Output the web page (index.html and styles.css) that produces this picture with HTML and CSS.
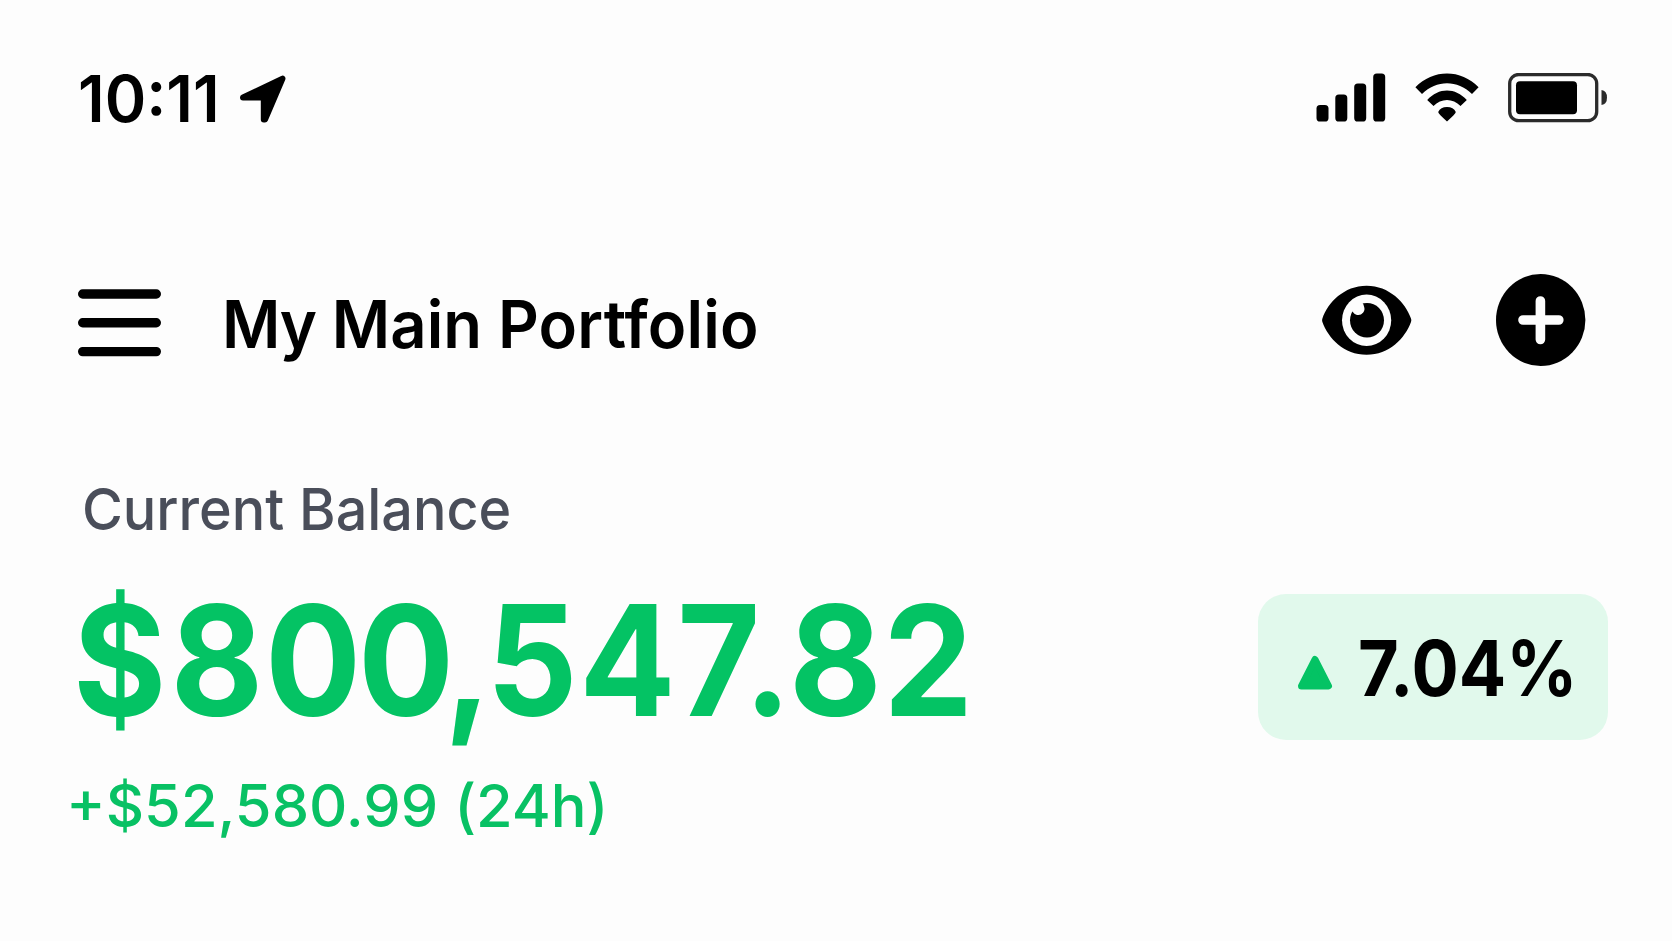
FILE: index.html
```html
<!DOCTYPE html>
<html lang="en">
<head>
<meta charset="utf-8">
<title>My Main Portfolio</title>
<link rel="stylesheet" href="styles.css">
</head>
<body>
<header class="status">
  <div class="status-left">
    <span class="time">10:11</span>
    <svg class="arrow" viewBox="0 0 48 50"><path d="M4 22.5 43.5 3.6 26 44.5H24.8V22.5Z"/></svg>
  </div>
  <div class="status-right">
    <svg class="signal" viewBox="0 0 70 50"><rect x="0.5" y="32" width="12" height="16.5" rx="3.6"/><rect x="19.3" y="21.5" width="12" height="27" rx="3.6"/><rect x="38.2" y="10.5" width="12" height="38" rx="3.6"/><rect x="57.2" y=".5" width="12" height="48" rx="3.6"/></svg>
    <svg class="wifi" viewBox="0 0 64 50"><path d="M.4 14.8C18-3.6 46-3.6 63.6 14.8L57 21.5C42.5 7 21.5 7 7 21.5ZM12.2 27.5C23.5 14.7 40.5 14.7 51.8 27.5L45.5 33.6C38 25.5 26 25.5 18.5 33.6ZM23.2 39.5Q25.5 34.5 32 34.5T40.8 39.5Q40.8 41 32 49Q23.2 41 23.2 39.5Z" transform="translate(0 -.5)"/></svg>
    <svg class="battery" viewBox="0 0 100 50"><rect x="1.7" y="1.5" width="87" height="46.2" rx="9" class="case"/><rect x="8" y="8.3" width="61" height="33" rx="4"/><path d="M93.5 16.9Q99 17.7 99 24.5T93.5 31.9Z" class="nub"/></svg>
  </div>
</header>
<nav class="bar">
  <svg class="menu" viewBox="0 0 84 70"><path d="M4.7 5H78.3M4.7 33.8H78.3M4.7 62.6H78.3"/></svg>
  <h1 class="title"><span class="t1">My</span> Main <span class="t2">Portfolio</span></h1>
  <svg class="eye" viewBox="0 0 90 70"><path d="M.4 37Q-.2 35.3 .4 33.5C6 17.5 22 .8 44.6 .8S83.3 17.5 89 33.5Q89.6 35.3 89 37C83.3 53 67.2 69.8 44.6 69.8S6 53 .4 37Z"/><ellipse cx="44.6" cy="35.3" rx="24.6" ry="25.7" class="white"/><ellipse cx="45" cy="35.3" rx="17" ry="17.3"/><path d="M30.3 26.5Q32.5 29.5 35 29.9A6.2 6.2 0 0 0 42 21.5Q41.7 19 40 17.4L34 14 26 22Z" class="white"/></svg>
  <svg class="plus" viewBox="0 0 90 92"><ellipse cx="44.700" cy="46" rx="44.700" ry="46"/><path d="M27 46H62.8M44.4 27V65.5" /></svg>
</nav>
<main class="balance">
  <p class="label">Current Balance</p>
  <div class="row">
    <p class="amount"><span class="cur">$</span><span class="d8">8</span><span class="d0">0</span><span class="d0b">0</span><span class="comma">,</span><span class="rest">547.82</span></p>
    <div class="badge">
      <svg class="up" viewBox="0 0 36 36"><path d="M18 4.5 31.5 31H4.5Z"/></svg>
      <span class="percent">7.04%</span>
    </div>
  </div>
  <p class="delta">+$52,580.99 (24h)</p>
</main>
</body>
</html>
```
FILE: styles.css
```css
* { box-sizing: border-box; }
body {
  margin: 0;
  width: 1672px;
  height: 941px;
  overflow: hidden;
  background: #fdfdfd;
  color: #000;
  font-family: Inter, "Liberation Sans", sans-serif;
}
h1, p { margin: 0; }
h1, p, span { line-height: 1; white-space: nowrap; transform-origin: 0 50%; }
svg { display: block; flex: none; }

.status { display: flex; justify-content: space-between; padding: 67px 64px 0 78px; height: 131px; }
.status-left, .status-right { display: flex; }
.time { font-size: 64px; font-weight: 570; width: 161px; transform: scaleX(.984); }
.arrow { width: 48px; height: 50px; margin-top: 8px; }
.arrow path { stroke: #000; stroke-width: 6; stroke-linejoin: round; }
.status-right { padding-top: 6px; }
.signal { width: 70px; height: 50px; }
.wifi { width: 64px; height: 50px; margin-left: 28.5px; }
.battery { width: 100px; height: 50px; margin-left: 29.5px; }
.case { fill: none; stroke: #2b2b2b; stroke-width: 3.3; }
.nub { fill: #2b2b2b; }

.bar { display: flex; padding: 143px 86px 0 78px; height: 300px; }
.menu { width: 84px; height: 70px; margin-top: 15px; }
.menu path { stroke: #000; stroke-width: 9.4; stroke-linecap: round; }
.title { flex: 1; margin: 18.3px 0 0 59.5px; font-size: 65.3px; font-weight: 600; transform: scaleX(.97); }
.t1 { letter-spacing: -1.2px; }
.t2 { letter-spacing: .2px; }
.eye { width: 90px; height: 70px; margin: 11px 84px 0 0; }
.white { fill: #fdfdfd; }
.plus { width: 90px; height: 92px; }
.plus path { stroke: #fdfdfd; stroke-width: 9.6; stroke-linecap: round; }

.balance { padding: 49px 64px 0 66px; }
.label { margin-left: 16px; height: 58px; font-size: 58.2px; font-weight: 450; color: #4a4e5a; transform: scaleX(.957); }
.row { display: flex; justify-content: space-between; margin-top: 45px; height: 157px; padding-left: 7px; }
.amount { margin-top: 1px; font-size: 153.6px; font-weight: 700; color: #04c364; transform: scaleX(.929); }
.cur { letter-spacing: 4.5px; }
.d8 { letter-spacing: 1.7px; }
.d0 { letter-spacing: -3.5px; }
.d0b { letter-spacing: -11px; }
.comma { letter-spacing: -5.6px; }
.rest { letter-spacing: 1.6px; }
.badge { display: flex; width: 350px; height: 146px; margin: 11px 0 0; padding: 36px 0 0 39px; border-radius: 28px; background: #e1f9ec; flex: none; }
.up { width: 36px; height: 36px; margin-top: 25px; }
.up path { fill: #04c364; stroke: #04c364; stroke-width: 7; stroke-linejoin: round; }
.percent { margin-left: 25px; font-size: 77px; font-weight: 700; transform: scaleX(.911); }
.delta { margin-top: 35.5px; font-size: 59px; font-weight: 450; color: #08c164; transform: scaleX(1.008); }
```
